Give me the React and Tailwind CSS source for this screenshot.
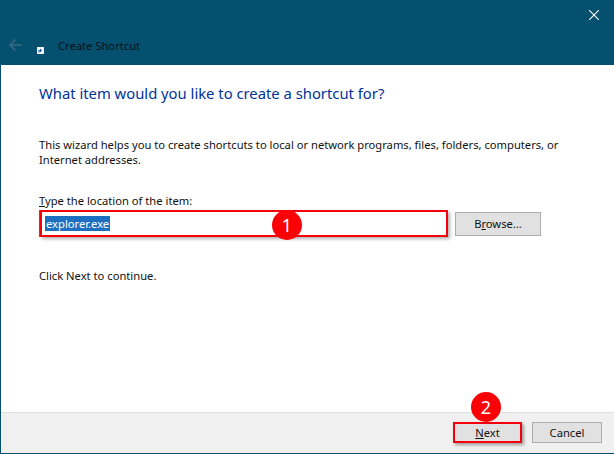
import React from 'react';

const font = { fontFamily: '"Noto Sans", "Open Sans", sans-serif' };

const Badge = ({ n, className }) => (
  <div className={`absolute flex h-[30px] w-[30px] items-center justify-center rounded-full bg-[#fb0007] text-[18px] leading-none text-white ${className}`}>
    {n}
  </div>
);

const App = () => {
  return (
    <div style={font} className="relative flex h-[454px] w-[614px] flex-col overflow-hidden bg-[#05506f] text-[11.2px] text-[#111]">
      {/* title bar */}
      <div className="relative flex h-[65px] shrink-0 items-end pb-[11px] pl-2">
        <svg width="15" height="14" viewBox="0 0 15 14" className="mb-[2px]" fill="none" stroke="#3a6a83" strokeWidth="1.6">
          <path d="M14 7H2M7.5 1.5L2 7l5.5 5.5" />
        </svg>
        <svg width="7" height="7" viewBox="0 0 7 7" className="ml-[14px]">
          <rect width="7" height="7" fill="#eef2f6" />
          <path d="M2 5.5V3.5h2M3 2l1.5 1.5L3 5" stroke="#1c4f9c" strokeWidth="1" fill="none" />
        </svg>
        <span className="ml-[14px] leading-[16px] text-[#06121a]">Create Shortcut</span>
        <svg width="10" height="10" viewBox="0 0 10 10" className="absolute right-[15px] top-[10px]" stroke="#fff" strokeWidth="1.1">
          <path d="M0 0l10 10M10 0L0 10" />
        </svg>
      </div>

      {/* wizard page */}
      <div className="ml-px mb-px flex flex-1 flex-col bg-white">
        <div className="flex-1 pl-[38px] pr-[40px] pt-[17px]">
          <h1 className="text-[14.8px] font-normal leading-[22px] text-[#003399]">What item would you like to create a shortcut for?</h1>
          <p className="mt-[33px] w-[535px] leading-[15px]">
            This wizard helps you to create shortcuts to local or network programs, files, folders, computers, or Internet addresses.
          </p>
          <div className="mt-[26px] leading-[15px]">
            <u>T</u>ype the location of the item:
          </div>
          <div className="mt-[2px] flex items-start">
            <div className="flex h-[27px] w-[409px] border-l border-[#1f6fc0]">
              <div className="flex h-[27px] w-[408px] items-center border-2 border-[#f5000a] pl-[3px] shadow-[2px_2px_3px_rgba(0,0,0,0.3)]">
                <span className="bg-[#1f6fc0] px-px leading-[15px] text-white">explorer.exe</span>
              </div>
            </div>
            <button className="ml-[7px] mt-[2px] h-[24px] w-[86px] border border-[#adadad] bg-[#e1e1e1] leading-none">
              B<u>r</u>owse...
            </button>
          </div>
          <p className="mt-[31px] leading-[15px]">Click Next to continue.</p>
        </div>

        {/* footer */}
        <div className="flex h-[41px] shrink-0 items-start justify-end gap-[10px] border-t border-[#dfdfdf] bg-[#f0f0f0] pr-[12px] pt-[9px]">
          <button className="h-[21px] w-[69px] border-2 border-[#f5000a] bg-[#e1e1e1] leading-none shadow-[2px_2px_3px_rgba(0,0,0,0.35)]">
            <u>N</u>ext
          </button>
          <button className="h-[21px] w-[70px] border border-[#adadad] bg-[#e1e1e1] leading-none">Cancel</button>
        </div>
      </div>

      <Badge n="1" className="left-[272px] top-[210px]" />
      <Badge n="2" className="left-[471px] top-[392px]" />
    </div>
  );
};

export default App;
